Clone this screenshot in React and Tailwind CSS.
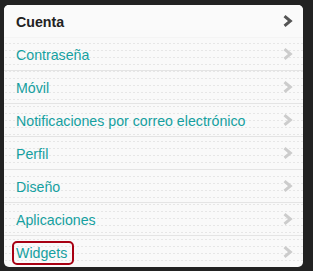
import React from "react";

const items = [
  "Contraseña",
  "Móvil",
  "Notificaciones por correo electrónico",
  "Perfil",
  "Diseño",
  "Aplicaciones",
];

function Chevron({ active }) {
  return (
    <svg width="11" height="12" viewBox="0 0 11 12" className="shrink-0">
      <path
        d="M2.5 1.2 L8.3 6 L2.5 10.8"
        fill="none"
        stroke={active ? "#555555" : "#cccccc"}
        strokeWidth="3"
        strokeLinejoin="miter"
      />
    </svg>
  );
}

export default function App() {
  return (
    <div
      className="w-[313px] h-[271px] bg-[#222222] pl-[4px] pt-[5px]"
      style={{ fontFamily: '"Liberation Sans", Arial, sans-serif' }}
    >
      <div className="w-[299px] h-[262px] rounded-[5px] overflow-hidden bg-[#f9f9f9] bg-[radial-gradient(#e6e6e6_0.5px,transparent_0.6px)] bg-[length:4px_7px] flex flex-col">
        <div className="h-[33px] shrink-0 flex items-center justify-between pl-[12px] pr-[10px] bg-[#fafafa] border-b border-[#f4f4f4]">
          <span className="text-[14.2px] font-bold text-[#222222] pt-[3px]">Cuenta</span>
          <Chevron active />
        </div>
        {items.map((t) => (
          <div
            key={t}
            className="h-[33px] shrink-0 flex items-center justify-between pl-[12px] pr-[10px] border-b border-[#e4e4e4]"
          >
            <span className="text-[14.2px] text-[#15a0a0] pt-[3px]">{t}</span>
            <Chevron />
          </div>
        ))}
        <div className="h-[32px] shrink-0 flex items-center justify-between pl-[8px] pr-[10px]">
          <span className="h-[24px] mt-[2px] flex items-center pt-[2px] pl-[2px] pr-[5px] border-2 border-[#a80012] rounded-[5px] text-[14.2px] text-[#15a0a0]">
            Widgets
          </span>
          <Chevron />
        </div>
      </div>
    </div>
  );
}
